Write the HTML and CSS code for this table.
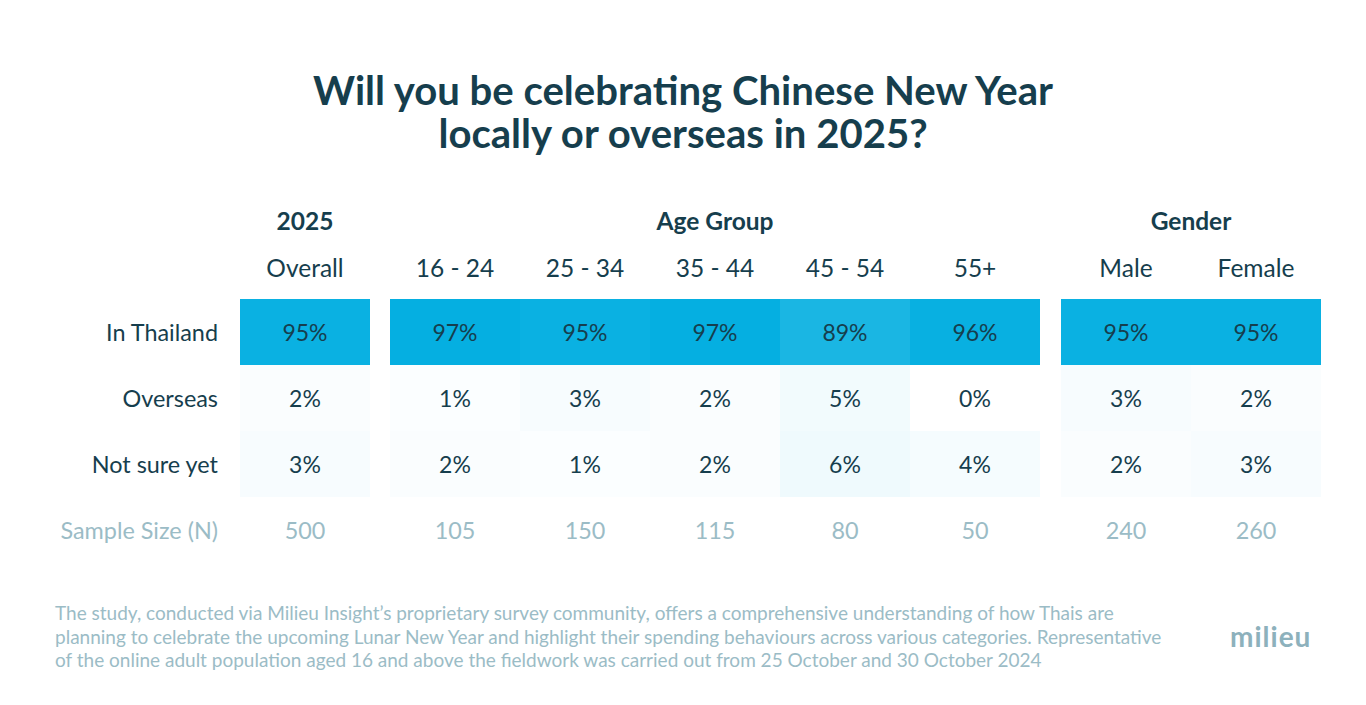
FILE: index.html
```html
<!DOCTYPE html>
<html lang="en">
<head>
<meta charset="utf-8">
<title>Chinese New Year 2025</title>
<link rel="stylesheet" href="styles.css">
</head>
<body>
<main class="page">
  <h1 class="title"><span class="tline">Will you be celebrating Chinese New Year</span><span class="tline">locally or overseas in 2025?</span></h1>

  <section class="table">
    <div class="labels">
      <div class="ghead"></div>
      <div class="shead"></div>
      <div class="cell label">In Thailand</div>
      <div class="cell label">Overseas</div>
      <div class="cell label">Not sure yet</div>
      <div class="cell sample">Sample Size (N)</div>
    </div>

    <div class="group g1">
      <div class="ghead">2025</div>
      <div class="shead">Overall</div>
      <div class="cell" style="background: rgba(5,175,225,0.979)">95%</div>
      <div class="cell" style="background: rgba(5,175,225,0.021)">2%</div>
      <div class="cell" style="background: rgba(5,175,225,0.031)">3%</div>
      <div class="cell sample">500</div>
    </div>

    <div class="group g5">
      <div class="ghead">Age Group</div>
      <div class="shead">16 - 24</div>
      <div class="shead">25 - 34</div>
      <div class="shead">35 - 44</div>
      <div class="shead">45 - 54</div>
      <div class="shead">55+</div>

      <div class="cell" style="background: rgba(5,175,225,1)">97%</div>
      <div class="cell" style="background: rgba(5,175,225,0.979)">95%</div>
      <div class="cell" style="background: rgba(5,175,225,1)">97%</div>
      <div class="cell" style="background: rgba(5,175,225,0.918)">89%</div>
      <div class="cell" style="background: rgba(5,175,225,0.99)">96%</div>

      <div class="cell" style="background: rgba(5,175,225,0.015)">1%</div>
      <div class="cell" style="background: rgba(5,175,225,0.031)">3%</div>
      <div class="cell" style="background: rgba(5,175,225,0.021)">2%</div>
      <div class="cell" style="background: rgba(5,175,225,0.052)">5%</div>
      <div class="cell" style="background: rgba(5,175,225,0)">0%</div>

      <div class="cell" style="background: rgba(5,175,225,0.021)">2%</div>
      <div class="cell" style="background: rgba(5,175,225,0.015)">1%</div>
      <div class="cell" style="background: rgba(5,175,225,0.021)">2%</div>
      <div class="cell" style="background: rgba(5,175,225,0.062)">6%</div>
      <div class="cell" style="background: rgba(5,175,225,0.041)">4%</div>

      <div class="cell sample">105</div>
      <div class="cell sample">150</div>
      <div class="cell sample">115</div>
      <div class="cell sample">80</div>
      <div class="cell sample">50</div>
    </div>

    <div class="group g2">
      <div class="ghead">Gender</div>
      <div class="shead">Male</div>
      <div class="shead">Female</div>

      <div class="cell" style="background: rgba(5,175,225,0.979)">95%</div>
      <div class="cell" style="background: rgba(5,175,225,0.979)">95%</div>

      <div class="cell" style="background: rgba(5,175,225,0.031)">3%</div>
      <div class="cell" style="background: rgba(5,175,225,0.021)">2%</div>

      <div class="cell" style="background: rgba(5,175,225,0.021)">2%</div>
      <div class="cell" style="background: rgba(5,175,225,0.031)">3%</div>

      <div class="cell sample">240</div>
      <div class="cell sample">260</div>
    </div>
  </section>

  <footer class="footer">
    <p class="note">The study, conducted via Milieu Insight’s proprietary survey community, offers a comprehensive understanding of how Thais are planning to celebrate the upcoming Lunar New Year and highlight their spending behaviours across various categories. Representative of the online adult population aged 16 and above the fieldwork was carried out from 25 October and 30 October 2024</p>
    <div class="logo">milieu</div>
  </footer>
</main>
</body>
</html>
```

FILE: styles.css
```css
* { box-sizing: border-box; }

html, body {
  margin: 0;
  padding: 0;
  background: #ffffff;
}

body {
  font-family: Lato, "Open Sans", sans-serif;
  color: #163e4d;
  width: 1366px;
  height: 705px;
  overflow: hidden;
}

.page {
  padding-top: 70px;
}

.title {
  margin: 0;
  display: flex;
  flex-direction: column;
  align-items: center;
  gap: 3px;
  text-align: center;
  font-size: 40.1px;
  line-height: 40px;
  font-weight: 700;
  color: #163e4d;
}

.tline {
  display: block;
}

.table {
  display: flex;
  gap: 20px;
  margin-top: 44px;
}

.labels {
  width: 220px;
  display: flex;
  flex-direction: column;
}

.labels .cell {
  justify-content: flex-end;
  padding-right: 2px;
}

.group {
  display: grid;
  grid-template-rows: 46px 56px 66px 66px 66px 66px;
}

.g1 { grid-template-columns: 130px; }
.g5 { grid-template-columns: repeat(5, 130px); }
.g2 { grid-template-columns: repeat(2, 130px); margin-left: 1px; }

.g5 .ghead { grid-column: 1 / span 5; }
.g2 .ghead { grid-column: 1 / span 2; }

.ghead {
  height: 46px;
  display: flex;
  align-items: center;
  justify-content: center;
  font-size: 24.5px;
  font-weight: 700;
}

.shead {
  height: 56px;
  display: flex;
  align-items: flex-start;
  justify-content: center;
  padding-top: 10px;
  font-size: 24.5px;
  font-weight: 400;
}

.cell {
  height: 66px;
  display: flex;
  align-items: center;
  justify-content: center;
  font-size: 23px;
}

.cell.label {
  font-size: 23.4px;
}

.cell.sample {
  color: #9bbcc6;
  background: transparent;
  font-size: 23.4px;
}

.footer {
  display: flex;
  align-items: center;
  margin-top: 38px;
  padding-left: 55px;
}

.note {
  margin: 0;
  width: 1115px;
  font-size: 19px;
  line-height: 23.5px;
  color: #9bbcc6;
}

.logo {
  margin-left: 60px;
  font-size: 28px;
  font-weight: 700;
  color: #8db1bc;
  letter-spacing: 1px;
}
```
